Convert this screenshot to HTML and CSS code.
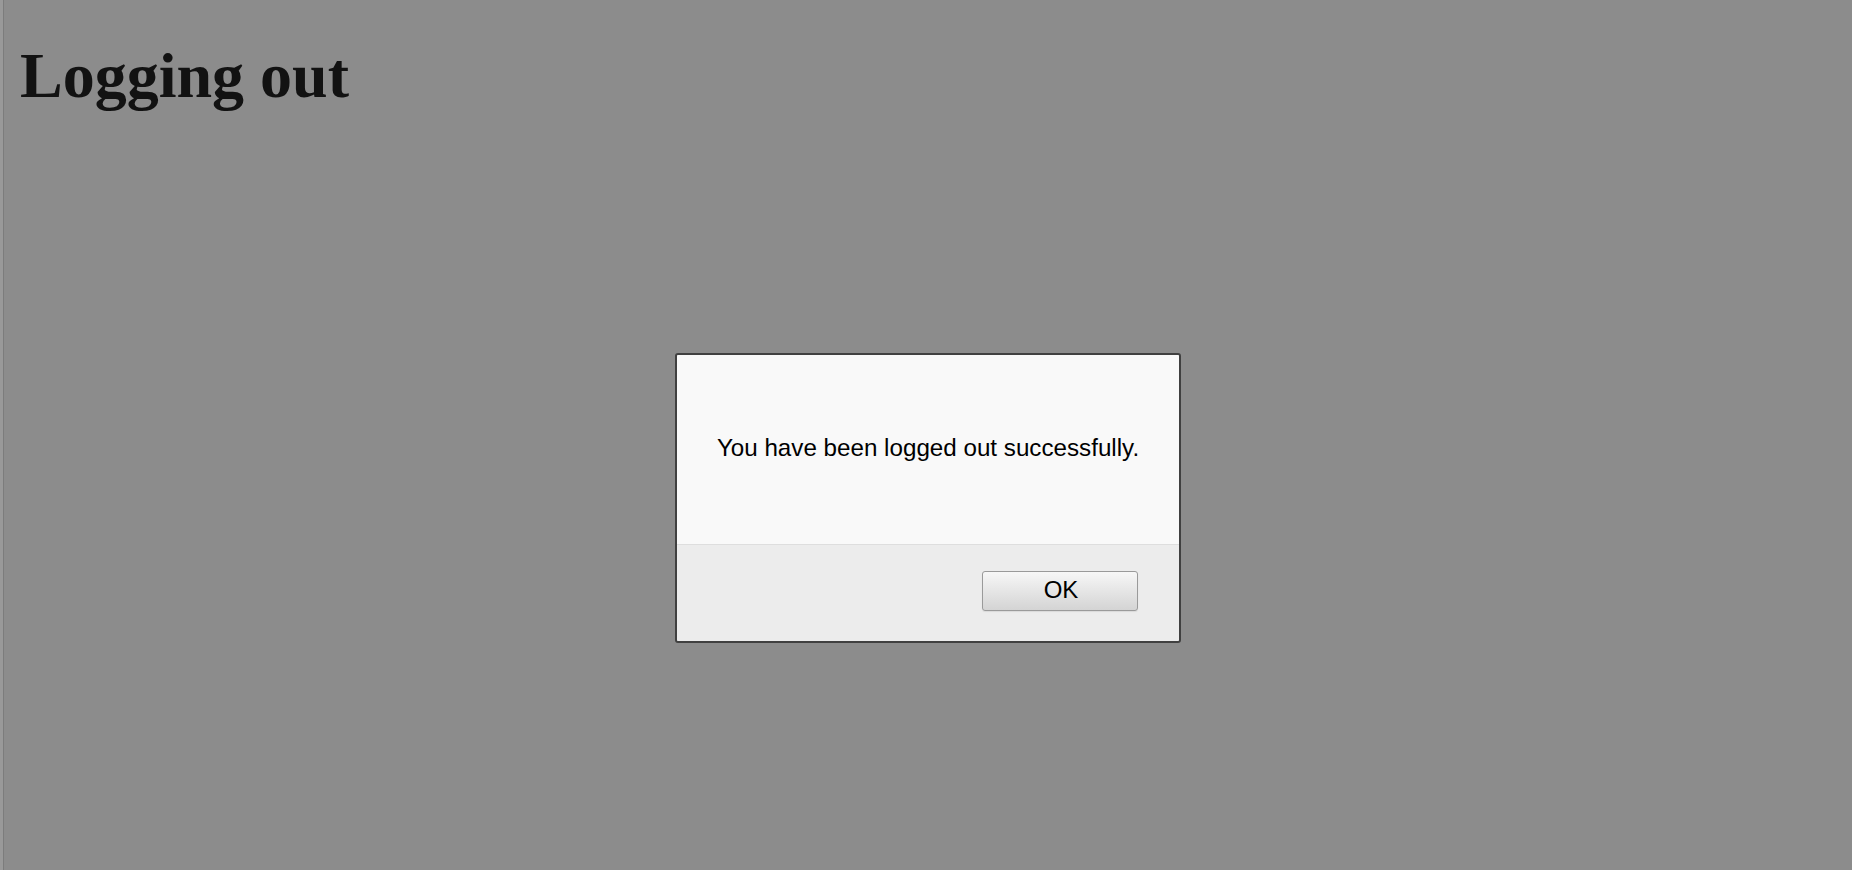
FILE: index.html
```html
<!DOCTYPE html>
<html lang="en">
<head>
<meta charset="utf-8">
<title>Logging out</title>
<link rel="stylesheet" href="styles.css">
</head>
<body>
<div class="page">
  <h1 class="title">Logging out</h1>
</div>
<div class="overlay">
  <div class="dialog" role="dialog">
    <div class="dialog-body">
      <p class="message">You have been logged out successfully.</p>
    </div>
    <div class="dialog-footer">
      <button class="btn-ok" type="button">OK</button>
    </div>
  </div>
</div>
</body>
</html>
```

FILE: styles.css
```css
html, body {
  margin: 0;
  padding: 0;
  height: 100%;
}

body {
  background: #8c8c8c;
  font-family: "Liberation Serif", "Times New Roman", serif;
}

.page {
  box-sizing: border-box;
  height: 100%;
  border-left: 3px solid #999999;
  box-shadow: inset 1px 0 0 #7c7c7c;
  padding: 39px 0 0 17px;
}

.title {
  margin: 0;
  font-family: "Liberation Serif", "Times New Roman", serif;
  font-weight: bold;
  font-size: 64px;
  line-height: normal;
  color: #121212;
}

.overlay {
  position: fixed;
  inset: 0;
  display: flex;
  justify-content: center;
  align-items: flex-start;
  padding: 353px 0 0 4px;
  box-sizing: border-box;
}

.dialog {
  width: 502px;
  border: 2px solid #404040;
  border-radius: 3px;
  overflow: hidden;
  font-family: "Liberation Sans", Arial, sans-serif;
}

.dialog-body {
  height: 189px;
  background: #f9f9f9;
  border-bottom: 1px solid #dedede;
  display: flex;
  align-items: center;
  justify-content: center;
}

.message {
  margin: 0 0 4px 0;
  font-size: 24.2px;
  line-height: 28px;
  color: #000;
}

.dialog-footer {
  height: 96px;
  box-sizing: border-box;
  background: #ececec;
  display: flex;
  justify-content: flex-end;
  align-items: flex-start;
  padding: 26px 41px 0 0;
}

.btn-ok {
  width: 156px;
  height: 40px;
  box-sizing: border-box;
  border: 1px solid #9a9a9a;
  border-radius: 3px;
  background: linear-gradient(#f7f7f7, #d4d4d4);
  box-shadow: 0 1px 1px rgba(0, 0, 0, 0.08);
  font-family: "Liberation Sans", Arial, sans-serif;
  font-size: 24px;
  color: #000;
  padding: 0 0 2px 2px;
  line-height: 36px;
}
```
